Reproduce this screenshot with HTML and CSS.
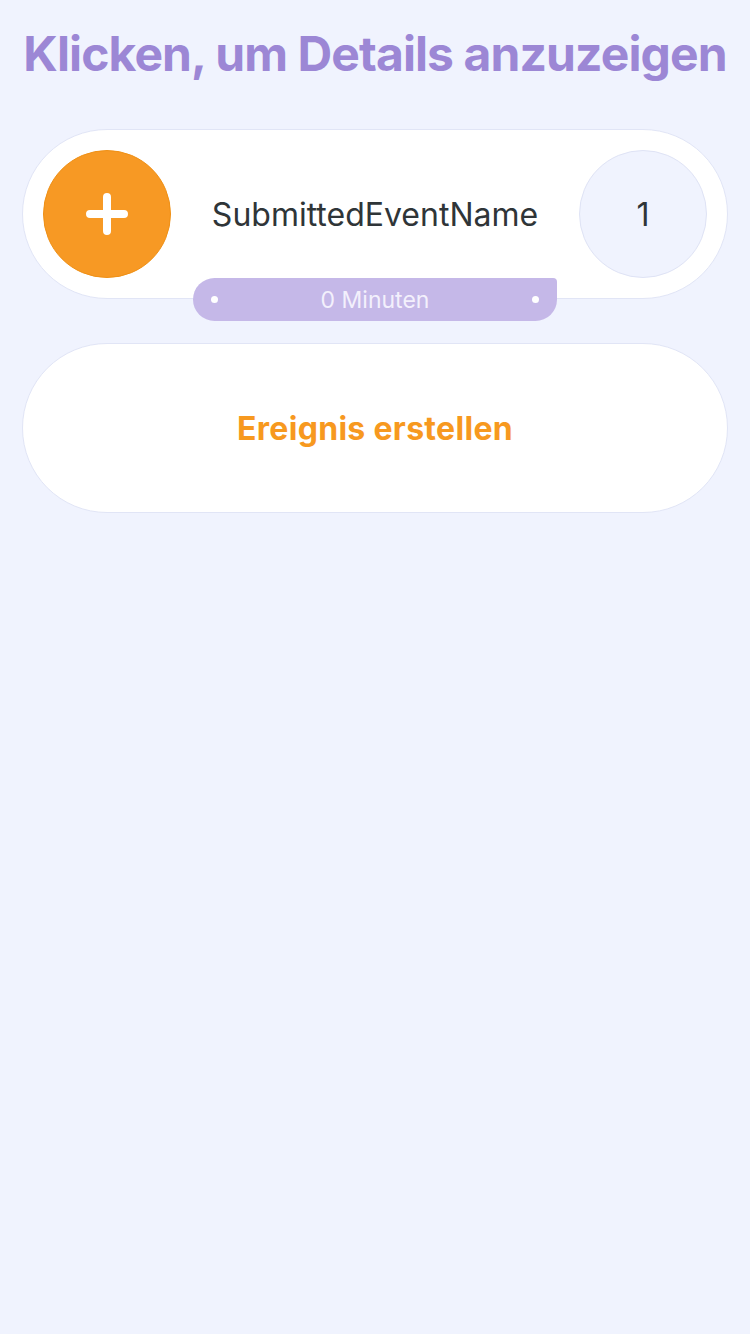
FILE: index.html
```html
<!DOCTYPE html>
<html lang="de">
<head>
<meta charset="utf-8">
<link rel="stylesheet" href="styles.css">
</head>
<body>
<main class="page">
  <h1 class="title">Klicken, um Details anzuzeigen</h1>
  <div class="event-card">
    <div class="add-btn">
      <svg width="44" height="44" viewBox="0 0 44 44"><path d="M22 5V39M5 22H39" stroke="#fff" stroke-width="8" stroke-linecap="round" fill="none"/></svg>
    </div>
    <div class="event-name">SubmittedEventName</div>
    <div class="count">1</div>
    <div class="duration">
      <span class="dot"></span>
      <span class="duration-text">0 Minuten</span>
      <span class="dot"></span>
    </div>
  </div>
  <div class="create-card">Ereignis erstellen</div>
</main>
</body>
</html>
```
FILE: styles.css
```css
html, body {
  margin: 0;
  padding: 0;
  background: #f0f3fe;
  font-family: Inter, "Noto Sans", sans-serif;
}
.page {
  padding: 22px 22px 0;
  display: flex;
  flex-direction: column;
  min-height: 1334px;
  box-sizing: border-box;
}
.title {
  margin: 0 -22px;
  font-size: 48px;
  font-weight: 700;
  line-height: 64px;
  color: #9c87d5;
  text-align: center;
  letter-spacing: -0.9px;
  white-space: nowrap;
}
.event-card {
  position: relative;
  margin-top: 43px;
  height: 170px;
  box-sizing: border-box;
  background: #fff;
  border: 1px solid #e1e5f6;
  border-radius: 85px;
  display: flex;
  align-items: center;
  padding: 0 20px;
}
.add-btn {
  width: 128px;
  height: 128px;
  box-sizing: border-box;
  border-radius: 50%;
  background: #f79924;
  border: 1px solid #ef9015;
  display: flex;
  align-items: center;
  justify-content: center;
  flex: none;
}
.event-name {
  flex: 1;
  text-align: center;
  font-size: 32px;
  color: #2f3538;
}
.count {
  width: 128px;
  height: 128px;
  box-sizing: border-box;
  border-radius: 50%;
  background: #f0f3fe;
  border: 1px solid #dfe3f5;
  display: flex;
  align-items: center;
  justify-content: center;
  font-size: 32px;
  color: #2f3538;
  flex: none;
}
.duration {
  position: absolute;
  left: 170px;
  bottom: -23px;
  width: 364px;
  height: 43px;
  box-sizing: border-box;
  background: #c5b8e8;
  border-radius: 22px 4px 22px 22px;
  display: flex;
  align-items: center;
  padding: 0 18px;
}
.dot {
  width: 7px;
  height: 7px;
  border-radius: 50%;
  background: #fff;
  flex: none;
}
.duration-text {
  flex: 1;
  text-align: center;
  color: #f3f0fc;
  font-size: 23px;
}
.create-card {
  margin-top: 44px;
  height: 170px;
  box-sizing: border-box;
  background: #fff;
  border: 1px solid #e1e5f6;
  border-radius: 85px;
  display: flex;
  align-items: center;
  justify-content: center;
  font-size: 32px;
  font-weight: 700;
  color: #f7991f;
  letter-spacing: 0.3px;
}
```
